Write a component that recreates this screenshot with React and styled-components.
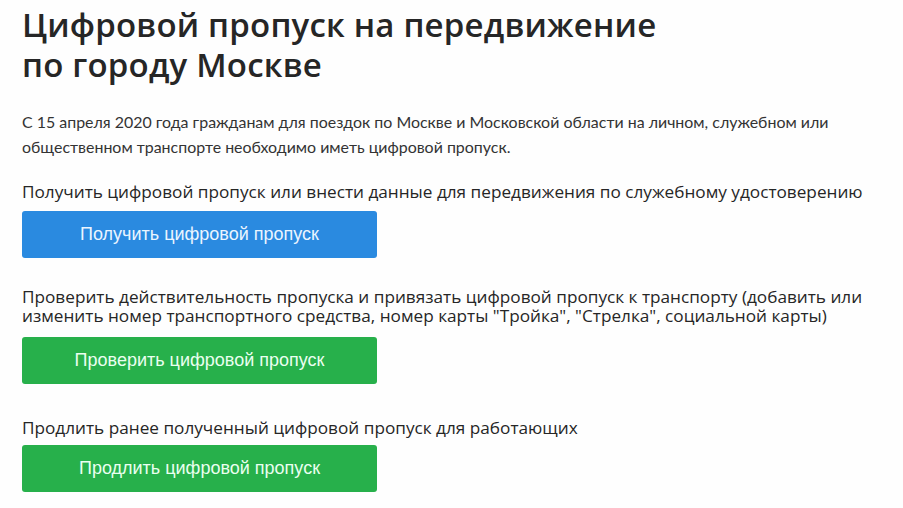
import React from "react";
import styled, { createGlobalStyle } from "styled-components";

const Global = createGlobalStyle`
  html, body { margin: 0; padding: 0; background: #fefefe; }
  body { font-family: "Open Sans", "Noto Sans", sans-serif; color: #2b2b2b; }
`;

const Page = styled.main`
  display: flex;
  flex-direction: column;
  padding: 5px 0 0 22px;
  width: 903px;
  box-sizing: border-box;
`;

const Title = styled.h1`
  margin: 0;
  font-family: "Open Sans", "Noto Sans", sans-serif;
  font-weight: 600;
  font-size: 33px;
  line-height: 40px;
  color: #262626;
  letter-spacing: 0.2px;
`;

const Lead = styled.p`
  margin: 24px 0 0;
  font-family: "Lato", "Noto Sans", sans-serif;
  font-size: 15.95px;
  line-height: 25px;
  color: #333;
`;

const Section = styled.section`
  display: flex;
  flex-direction: column;
  align-items: flex-start;
  margin-top: ${(p) => p.$top}px;
`;

const Label = styled.div`
  font-family: "Open Sans", "Noto Sans", sans-serif;
  font-size: 17.2px;
  line-height: 19px;
  color: #262626;
  white-space: nowrap;
  margin-bottom: ${(p) => p.$gap}px;
`;

const Button = styled.button`
  width: 355px;
  height: 47px;
  border: none;
  border-radius: 3px;
  background: ${(p) => (p.$blue ? "#2a8ae0" : "#27b04b")};
  color: ${(p) => (p.$blue ? "#eaf5ff" : "#eafff0")};
  font-family: "Liberation Sans", Arial, sans-serif;
  font-size: 18px;
  cursor: pointer;
  padding: 0;
`;

export default function App() {
  return (
    <>
      <Global />
      <Page>
        <Title>
          Цифровой пропуск на передвижение
          <br />
          по городу Москве
        </Title>
        <Lead>
          С 15 апреля 2020 года гражданам для поездок по Москве и Московской области на личном, служебном или
          <br />
          общественном транспорте необходимо иметь цифровой пропуск.
        </Lead>
        <Section $top={23}>
          <Label $gap={10}>
            Получить цифровой пропуск или внести данные для передвижения по служебному удостоверению
          </Label>
          <Button $blue>Получить цифровой пропуск</Button>
        </Section>
        <Section $top={29}>
          <Label $gap={12}>
            Проверить действительность пропуска и привязать цифровой пропуск к транспорту (добавить или
            <br />
            изменить номер транспортного средства, номер карты "Тройка", "Стрелка", социальной карты)
          </Label>
          <Button>Проверить цифровой пропуск</Button>
        </Section>
        <Section $top={34}>
          <Label $gap={8}>Продлить ранее полученный цифровой пропуск для работающих</Label>
          <Button>Продлить цифровой пропуск</Button>
        </Section>
      </Page>
    </>
  );
}
